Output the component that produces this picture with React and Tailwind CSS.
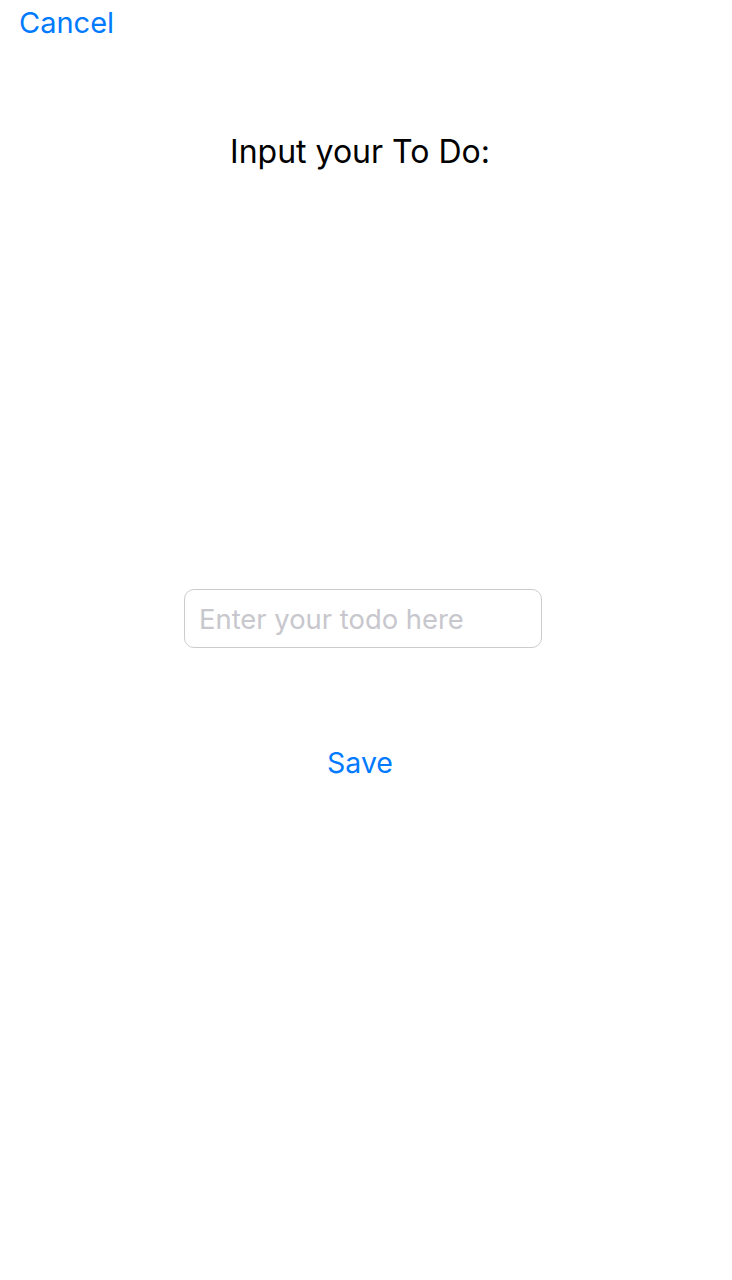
export default function App() {
  return (
    <div className="w-[732px] h-[1280px] bg-white flex flex-col" style={{ fontFamily: "Inter, 'Noto Sans', sans-serif" }}>
      <div className="pl-[19px] pt-[3px]">
        <span className="text-[29px] leading-[40px] text-[#007aff]">Cancel</span>
      </div>
      <div className="mt-[87px] flex justify-center pr-[12px]">
        <span className="text-[32px] leading-[44px] text-black">Input your To Do:</span>
      </div>
      <div className="mt-[415px] flex justify-center">
        <input
          className="w-[358px] h-[59px] ml-[-6px] border border-[#cccccc] rounded-[10px] px-[14px] text-[27.4px] outline-none placeholder:text-[#c7c7cd]"
          placeholder="Enter your todo here"
        />
      </div>
      <div className="mt-[95px] flex justify-center pr-[12px]">
        <span className="text-[28.5px] leading-[40px] text-[#007aff]">Save</span>
      </div>
    </div>
  );
}
